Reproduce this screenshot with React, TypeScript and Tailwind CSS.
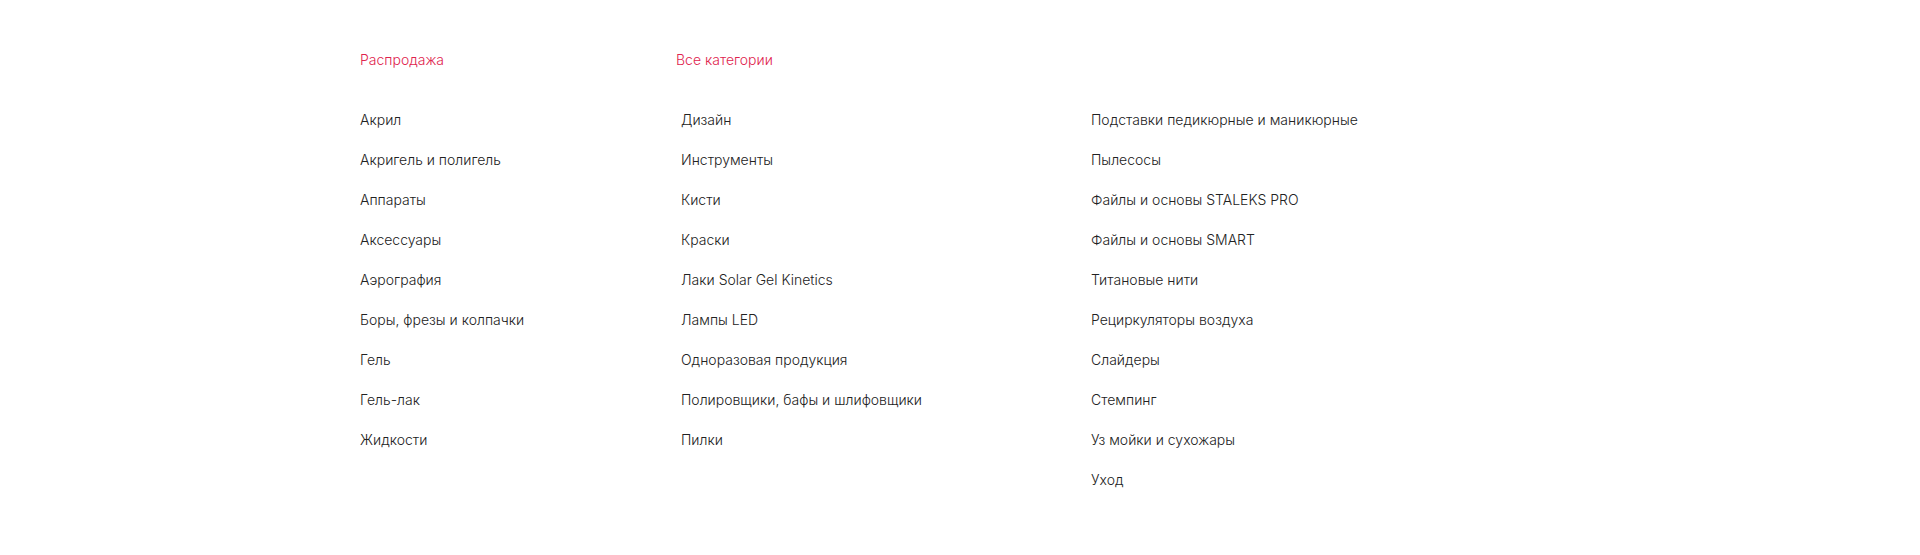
import React from "react";

const col1 = [
  "Акрил",
  "Акригель и полигель",
  "Аппараты",
  "Аксессуары",
  "Аэрография",
  "Боры, фрезы и колпачки",
  "Гель",
  "Гель-лак",
  "Жидкости",
];
const col2 = [
  "Дизайн",
  "Инструменты",
  "Кисти",
  "Краски",
  "Лаки Solar Gel Kinetics",
  "Лампы LED",
  "Одноразовая продукция",
  "Полировщики, бафы и шлифовщики",
  "Пилки",
];
const col3 = [
  "Подставки педикюрные и маникюрные",
  "Пылесосы",
  "Файлы и основы STALEKS PRO",
  "Файлы и основы SMART",
  "Титановые нити",
  "Рециркуляторы воздуха",
  "Слайдеры",
  "Стемпинг",
  "Уз мойки и сухожары",
  "Уход",
];

function List({ items }: { items: string[] }) {
  return (
    <ul className="flex flex-col gap-[20px]">
      {items.map((t) => (
        <li key={t}>
          <a className="block text-[14px] font-light leading-[20px] text-[#222222]">{t}</a>
        </li>
      ))}
    </ul>
  );
}

export default function App() {
  return (
    <div
      className="min-h-[555px] w-full bg-white pt-[50px] pl-[360px]"
      style={{ fontFamily: "Inter, 'Noto Sans', sans-serif" }}
    >
      <div className="flex">
        <div className="w-[316px] shrink-0">
          <div className="text-[14px] font-light leading-[20px] text-[#e0234d]">Распродажа</div>
          <div className="mt-[40px]">
            <List items={col1} />
          </div>
        </div>
        <div>
          <div className="text-[14px] font-light leading-[20px] text-[#e0234d]">Все категории</div>
          <div className="mt-[40px] flex pl-[5px]">
            <div className="w-[410px] shrink-0">
              <List items={col2} />
            </div>
            <div>
              <List items={col3} />
            </div>
          </div>
        </div>
      </div>
    </div>
  );
}
